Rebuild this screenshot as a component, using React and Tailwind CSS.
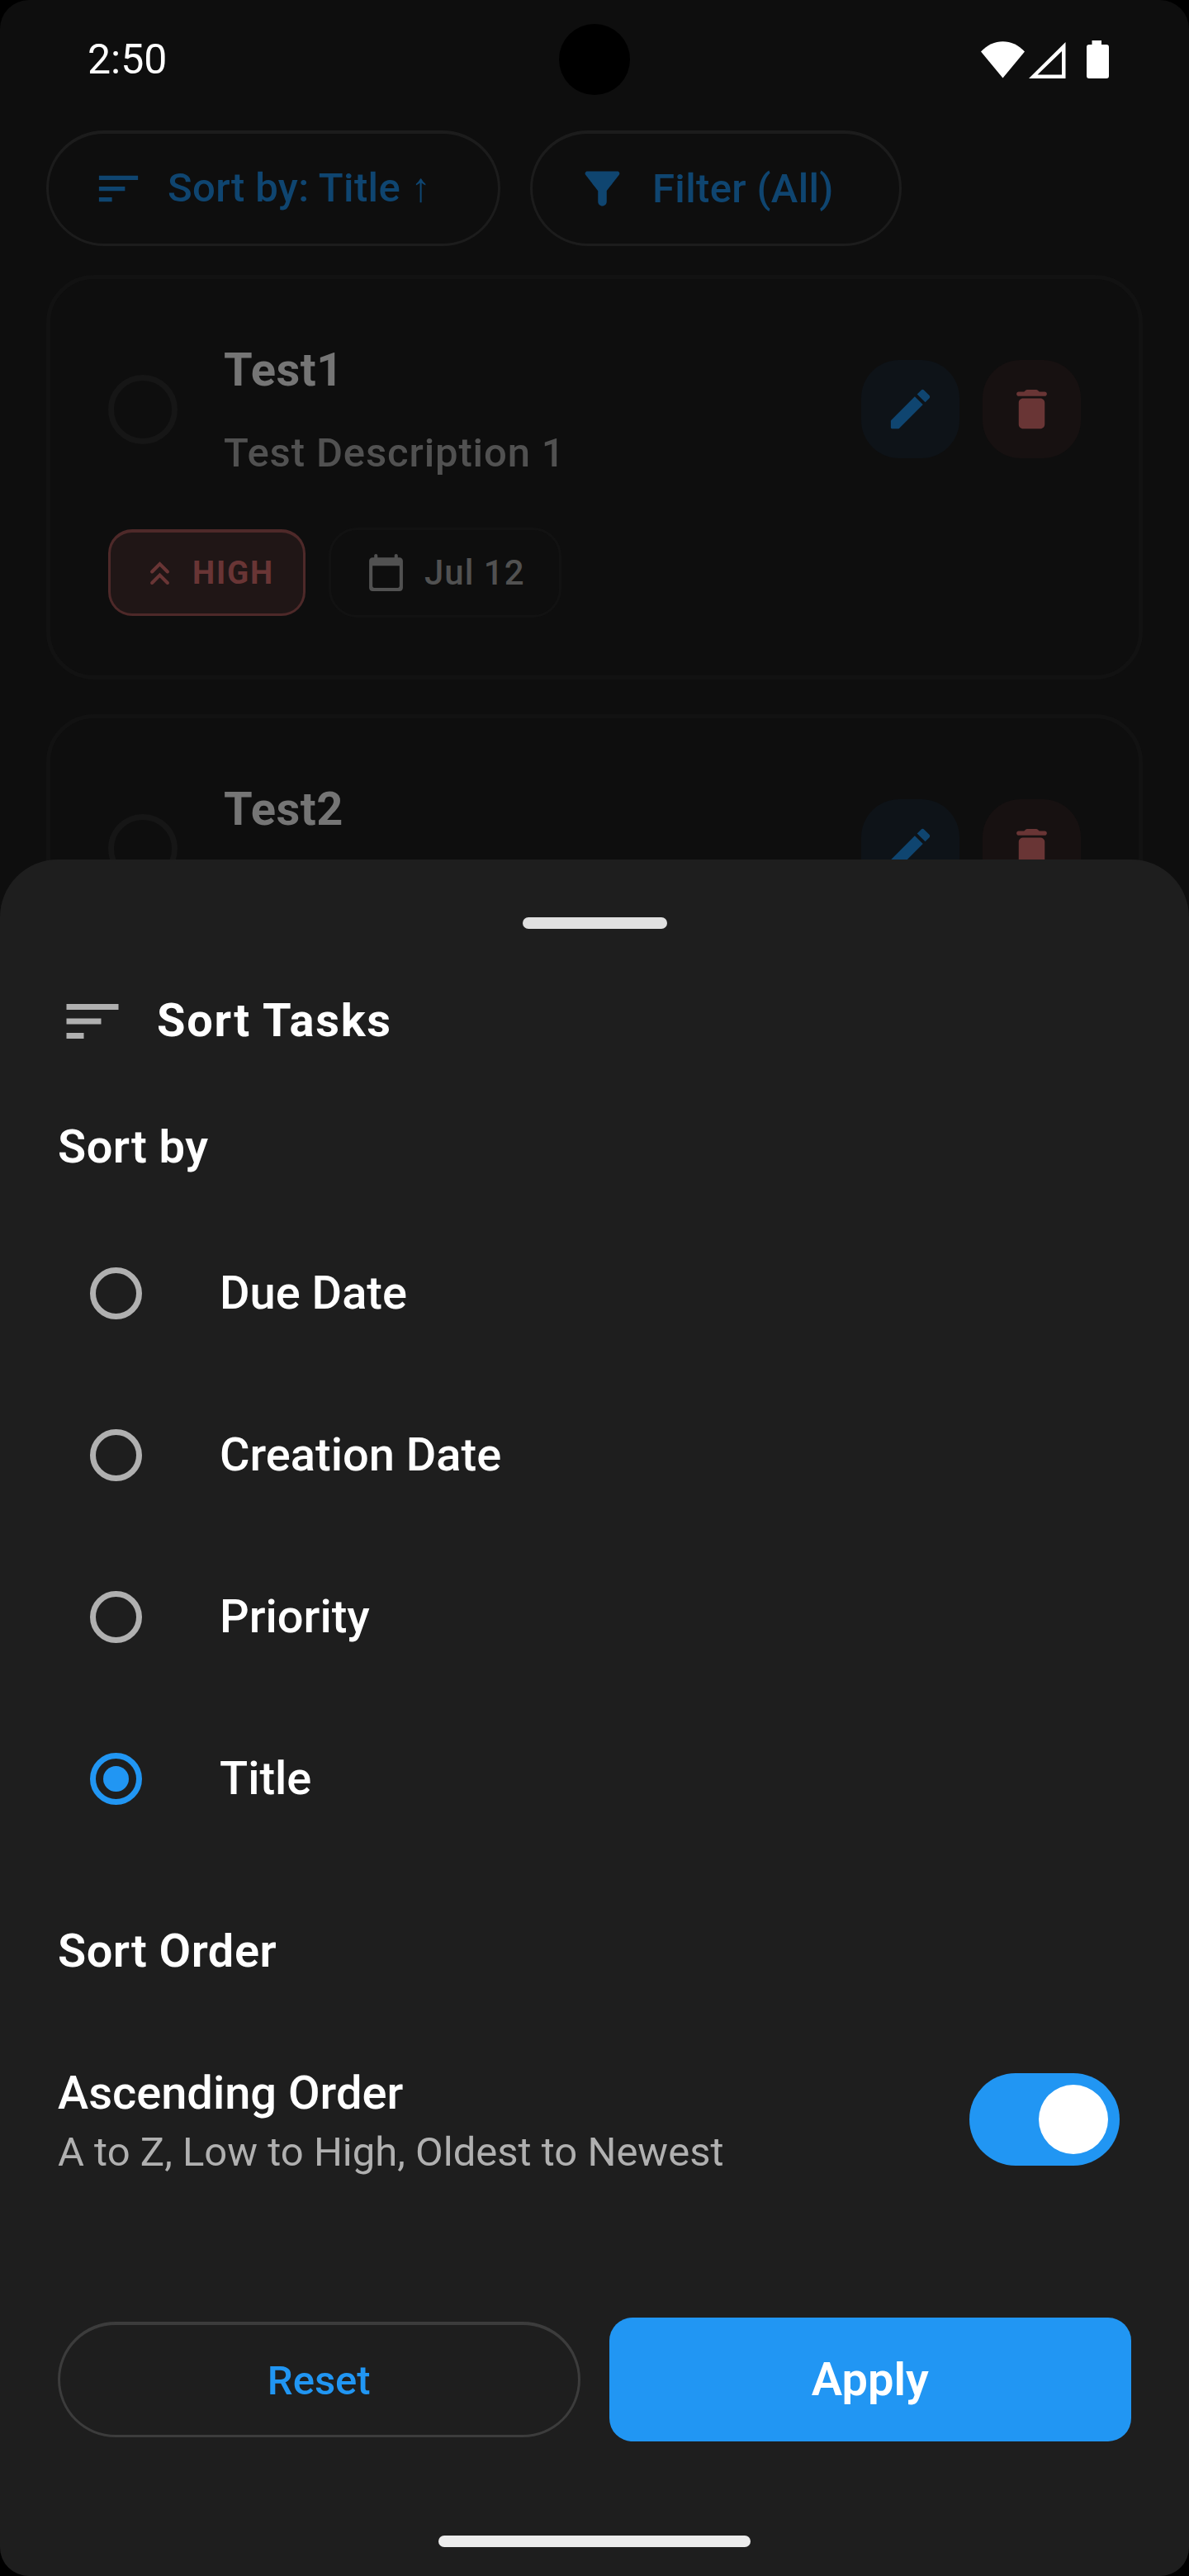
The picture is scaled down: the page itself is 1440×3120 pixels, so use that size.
import { useState } from "react";

function SortIcon({ className }) {
  return (
    <svg viewBox="0 0 24 24" fill="currentColor" className={className}>
      <path d="M3 18h6v-2H3v2zM3 6v2h18V6H3zm0 7h12v-2H3v2z" />
    </svg>
  );
}

function FilterIcon({ className }) {
  return (
    <svg viewBox="0 0 24 24" fill="currentColor" className={className}>
      <path d="M4.25 5.61C6.57 8.59 10 13 10 13v5c0 1.1.9 2 2 2s2-.9 2-2v-5s3.43-4.41 5.75-7.39C20.26 4.95 19.79 4 18.95 4H5.04c-.83 0-1.3.95-.79 1.61z" />
    </svg>
  );
}

function EditIcon({ className }) {
  return (
    <svg viewBox="0 0 24 24" fill="currentColor" className={className}>
      <path d="M3 17.46v3.04c0 .28.22.5.5.5h3.04c.13 0 .26-.05.35-.15L17.81 9.94l-3.75-3.75L3.15 17.1c-.1.1-.15.22-.15.36zM20.71 7.04c.39-.39.39-1.02 0-1.41l-2.34-2.34c-.39-.39-1.02-.39-1.41 0l-1.83 1.83 3.75 3.75 1.83-1.83z" />
    </svg>
  );
}

function DeleteIcon({ className }) {
  return (
    <svg viewBox="0 0 24 24" fill="currentColor" className={className}>
      <path d="M6 19c0 1.1.9 2 2 2h8c1.1 0 2-.9 2-2V9c0-1.1-.9-2-2-2H8c-1.1 0-2 .9-2 2v10zM18 4h-2.5l-.71-.71c-.18-.18-.44-.29-.7-.29H9.91c-.26 0-.52.11-.7.29L8.5 4H6c-.55 0-1 .45-1 1s.45 1 1 1h12c.55 0 1-.45 1-1s-.45-1-1-1z" />
    </svg>
  );
}

function DoubleUpIcon({ className }) {
  return (
    <svg viewBox="0 0 24 24" fill="none" stroke="currentColor" strokeWidth="2" strokeLinecap="round" className={className}>
      <path d="M7.4 17.6 12 13l4.6 4.6M7.4 11 12 6.4l4.6 4.6" />
    </svg>
  );
}

function CalendarIcon({ className }) {
  return (
    <svg viewBox="0 0 24 24" fill="currentColor" className={className}>
      <path d="M20 3h-1V2c0-.55-.45-1-1-1s-1 .45-1 1v1H7V2c0-.55-.45-1-1-1s-1 .45-1 1v1H4c-1.1 0-2 .9-2 2v16c0 1.1.9 2 2 2h16c1.1 0 2-.9 2-2V5c0-1.1-.9-2-2-2zm-1 18H5c-.55 0-1-.45-1-1V8h16v12c0 .55-.45 1-1 1z" />
    </svg>
  );
}

function StatusBar() {
  return (
    <header className="flex h-[158px] shrink-0 items-start justify-between pl-[106px] pr-[97px]">
      <span className="mt-[43px] text-[50px] leading-[58px] text-white">2:50</span>
      <svg viewBox="0 0 155 46" fill="white" className="mt-[49px] h-[46px] w-[155px]">
        <path d="M0 13.500C15-3 38-3 53 13.500L26.500 45.500z" />
        <path fillRule="evenodd" d="M102.500 2V46H58zM98 13 68.500 41.500H98z" />
        <path d="M134.500 0h11.500v5h6q3 0 3 3v35q0 3-3 3h-21q-3 0-3-3V8q0-3 3-3h3.500z" />
      </svg>
    </header>
  );
}

function TaskCard({ title, description, priority, due }) {
  return (
    <article className="h-[490px] shrink-0 rounded-[58px] border-[5px] border-[#121212] bg-[#0e0e0e] p-[70px]">
      <div className="flex h-[175px] items-center">
        <span className="size-[84px] shrink-0 rounded-full border-[7px] border-[#161616]" />
        <div className="mb-[3px] ml-14 flex-1">
          <h3 className="text-[56px] leading-[80px] font-bold tracking-[0.5px] text-[#757575]">{title}</h3>
          <p className="mt-[30px] h-[62px] text-[49px] leading-[62px] font-medium tracking-[0.875px] text-[#515151]">{description}</p>
        </div>
        <div className="flex gap-7">
          <button aria-label="Edit" className="flex size-[119px] items-center justify-center rounded-[46px] bg-[#0e1318] text-[#0f4570]">
            <EditIcon className="size-[63px]" />
          </button>
          <button aria-label="Delete" className="flex size-[119px] items-center justify-center rounded-[46px] bg-[#171111] text-[#693535]">
            <DeleteIcon className="size-[63px]" />
          </button>
        </div>
      </div>
      <div className="mt-[56px] flex h-[109px] items-center gap-7">
        {priority && (
          <span className="flex h-[105px] w-[239px] items-center gap-[15px] rounded-[29px] border-[3px] border-t-4 border-[#4e2929] bg-[#201616] pl-[35px] text-[38.5px] font-bold tracking-[1.75px] text-[#693535]">
            <DoubleUpIcon className="size-[49px]" />
            {priority}
          </span>
        )}
        {due && (
          <span className="flex h-[109px] w-[282px] items-center gap-[22px] rounded-[35px] border-[3px] border-[#121212] pl-[42px] text-[42px] font-medium tracking-[1px] text-[#515151]">
            <CalendarIcon className="size-[49px]" />
            {due}
          </span>
        )}
      </div>
    </article>
  );
}

function RadioRow({ label, selected, onSelect }) {
  return (
    <button role="radio" aria-checked={selected} onClick={onSelect} className="flex h-[196px] items-center pl-[39px] text-left">
      <span
        className={
          selected
            ? "flex size-[63px] items-center justify-center rounded-full border-[7px] border-[#2196f3]"
            : "flex size-[63px] items-center justify-center rounded-full border-[7px] border-[#b0b0b0]"
        }
      >
        {selected && <span className="size-[31px] rounded-full bg-[#2196f3]" />}
      </span>
      <span className="ml-[94px] text-[56px] font-medium">{label}</span>
    </button>
  );
}

function SortSheet() {
  const [sortBy, setSortBy] = useState("Title");
  const [ascending, setAscending] = useState(true);
  return (
    <section className="absolute inset-x-0 bottom-0 flex h-[2079px] flex-col rounded-t-[70px] bg-[#1e1e1e] px-[70px] text-white">
      <div className="mt-[70px] h-[14px] w-[175px] shrink-0 self-center rounded-full bg-[#e0e0e0]" />
      <div className="mt-[70px] flex h-[84px] items-center gap-[36px]">
        <SortIcon className="size-[84px] text-[#b0b0b0]" />
        <h2 className="mb-[3px] text-[56px] font-bold tracking-[1.75px]">Sort Tasks</h2>
      </div>
      <h3 className="mt-[70px] text-[56px] leading-[80px] font-semibold tracking-[0.5px]">Sort by</h3>
      <div role="radiogroup" className="mt-[39px] flex flex-col">
        {["Due Date", "Creation Date", "Priority", "Title"].map((label) => (
          <RadioRow key={label} label={label} selected={sortBy === label} onSelect={() => setSortBy(label)} />
        ))}
      </div>
      <h3 className="mt-[71px] text-[56px] leading-[80px] font-semibold tracking-[0.5px]">Sort Order</h3>
      <div className="mt-[92px] flex h-[144px] items-center justify-between pr-[14px]">
        <div>
          <p className="text-[56px] leading-[80px] font-medium">Ascending Order</p>
          <p className="text-[49px] leading-[64px] text-[#b0b0b0]">A to Z, Low to High, Oldest to Newest</p>
        </div>
        <button
          role="switch"
          aria-checked={ascending}
          aria-label="Ascending Order"
          onClick={() => setAscending(!ascending)}
          className={
            ascending
              ? "flex h-28 w-[182px] items-center justify-end rounded-full bg-[#2196f3] px-[14px]"
              : "flex h-28 w-[182px] items-center justify-start rounded-full bg-[#3c3c3c] px-[14px]"
          }
        >
          <span className="size-[84px] rounded-full bg-white" />
        </button>
      </div>
      <div className="mt-[168px] grid h-[150px] shrink-0 grid-cols-2 items-center gap-[35px]">
        <button className="h-[140px] rounded-full border-[3px] border-t-4 border-[#3c3c3c] pt-0.5 text-[49px] font-medium text-[#2196f3]">Reset</button>
        <button className="h-[150px] rounded-[28px] bg-[#2196f3] text-[56px] font-semibold">Apply</button>
      </div>
      <div className="mt-[114px] h-[14px] w-[378px] shrink-0 self-center rounded-full bg-[#ececec]" />
    </section>
  );
}

export default function App() {
  return (
    <div className="h-[3120px] w-[1440px] bg-black font-[Roboto,sans-serif]">
      <div className="relative flex h-full flex-col overflow-hidden rounded-[35px] bg-[#0e0e0e]">
        <StatusBar />
        <div className="absolute top-[29px] left-[677px] size-[86px] rounded-full bg-black" />
        <div className="flex h-[140px] shrink-0 gap-[36px] px-14 text-[49px] leading-[68px] font-medium text-[#0f4570]">
          <button className="flex w-[550px] items-center gap-7 rounded-full border-[3px] border-t-4 border-[#1c1c1c] pl-[53px] whitespace-nowrap">
            <SortIcon className="size-[63px]" />
            <span className="mb-0.5 tracking-[0.35px]">Sort by: Title ↑</span>
          </button>
          <button className="flex w-[450px] items-center gap-[29px] rounded-full border-[3px] border-t-4 border-[#1c1c1c] pl-[53px] whitespace-nowrap">
            <FilterIcon className="size-[63px]" />
            <span className="tracking-[0.35px]">Filter (All)</span>
          </button>
        </div>
        <main className="mt-[35px] flex flex-col gap-[42px] px-14">
          <TaskCard title="Test1" description="Test Description 1" priority="HIGH" due="Jul 12" />
          <TaskCard title="Test2" />
        </main>
        <SortSheet />
      </div>
    </div>
  );
}
